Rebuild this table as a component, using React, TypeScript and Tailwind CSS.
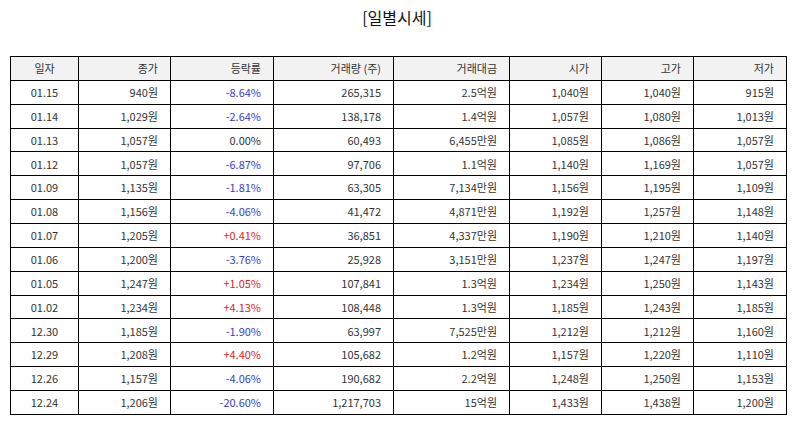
const rows: [string, string, string, string, string, string, string, string][] = [
  ["01.15", "940원", "-8.64%", "265,315", "2.5억원", "1,040원", "1,040원", "915원"],
  ["01.14", "1,029원", "-2.64%", "138,178", "1.4억원", "1,057원", "1,080원", "1,013원"],
  ["01.13", "1,057원", "0.00%", "60,493", "6,455만원", "1,085원", "1,086원", "1,057원"],
  ["01.12", "1,057원", "-6.87%", "97,706", "1.1억원", "1,140원", "1,169원", "1,057원"],
  ["01.09", "1,135원", "-1.81%", "63,305", "7,134만원", "1,156원", "1,195원", "1,109원"],
  ["01.08", "1,156원", "-4.06%", "41,472", "4,871만원", "1,192원", "1,257원", "1,148원"],
  ["01.07", "1,205원", "+0.41%", "36,851", "4,337만원", "1,190원", "1,210원", "1,140원"],
  ["01.06", "1,200원", "-3.76%", "25,928", "3,151만원", "1,237원", "1,247원", "1,197원"],
  ["01.05", "1,247원", "+1.05%", "107,841", "1.3억원", "1,234원", "1,250원", "1,143원"],
  ["01.02", "1,234원", "+4.13%", "108,448", "1.3억원", "1,185원", "1,243원", "1,185원"],
  ["12.30", "1,185원", "-1.90%", "63,997", "7,525만원", "1,212원", "1,212원", "1,160원"],
  ["12.29", "1,208원", "+4.40%", "105,682", "1.2억원", "1,157원", "1,220원", "1,110원"],
  ["12.26", "1,157원", "-4.06%", "190,682", "2.2억원", "1,248원", "1,250원", "1,153원"],
  ["12.24", "1,206원", "-20.60%", "1,217,703", "15억원", "1,433원", "1,438원", "1,200원"],
];

const headers = ["일자", "종가", "등락률", "거래량 (주)", "거래대금", "시가", "고가", "저가"];
const widths = [68, 92, 103, 120, 116, 92, 92, 93];

function rateColor(v: string) {
  if (v.startsWith("+")) return "text-[#e02424]";
  if (v.startsWith("-")) return "text-[#3a3acf]";
  return "text-[#333]";
}

export default function App() {
  return (
    <div
      className="w-[794px] h-[425px] bg-white text-[#333]"
      style={{ fontFamily: '"Noto Sans CJK KR", "Noto Sans", sans-serif' }}
    >
      <h1 className="pt-[5px] h-[56px] text-center text-[16px] leading-[24px] text-[#111]">[일별시세]</h1>
      <table className="ml-[10px] table-fixed border-collapse text-[11px]">
        <colgroup>
          {widths.map((w, i) => (
            <col key={i} style={{ width: w }} />
          ))}
        </colgroup>
        <thead>
          <tr className="h-[23.87px] bg-[#f2f2f2]">
            {headers.map((h, i) => (
              <th
                key={h}
                className={`border border-black font-normal px-[12px] ${i === 0 ? "text-center" : "text-right"}`}
              >
                {h}
              </th>
            ))}
          </tr>
        </thead>
        <tbody>
          {rows.map((r) => (
            <tr key={r[0]} className="h-[23.87px]">
              {r.map((c, i) => (
                <td
                  key={i}
                  className={`border border-black px-[12px] ${i === 0 ? "text-center" : "text-right"} ${i === 2 ? rateColor(c) : ""}`}
                >
                  {c}
                </td>
              ))}
            </tr>
          ))}
        </tbody>
      </table>
    </div>
  );
}
